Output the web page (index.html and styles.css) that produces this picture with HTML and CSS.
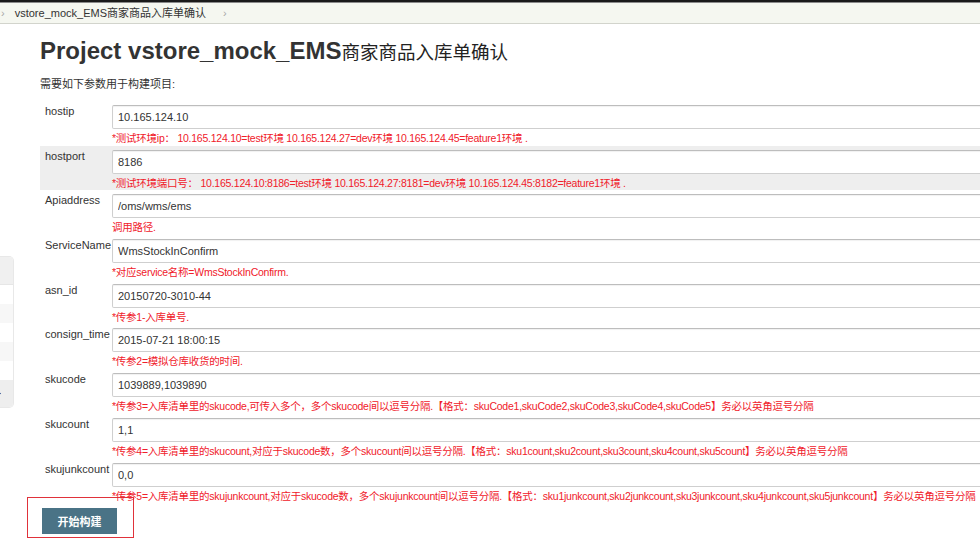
FILE: index.html
```html
<!DOCTYPE html>
<html lang="zh-CN">
<head>
<meta charset="utf-8">
<title>vstore_mock_EMS商家商品入库单确认</title>
<link rel="stylesheet" href="styles.css">
</head>
<body>
<div class="topbar"></div>
<nav class="crumbs">
  <span class="sep">›</span>
  <span class="crumb">vstore_mock_EMS商家商品入库单确认</span>
  <span class="sep">›</span>
</nav>
<div class="page">
  <aside class="side">
    <div class="widget">
      <div class="w-head"></div>
      <div class="w-row"></div>
      <div class="w-row alt"></div>
      <div class="w-row"></div>
      <div class="w-row alt"></div>
      <div class="w-row"></div>
      <div class="w-foot">
        <svg class="w-icon" width="14" height="12" viewBox="0 0 14 12" aria-hidden="true">
          <path d="M3 3 L7 5.5 L3 8 M3 10 L7 10" fill="none" stroke="#2a4d8f" stroke-width="1.3"/>
        </svg>
      </div>
    </div>
  </aside>
  <main class="main">
    <h1 class="title">Project vstore_mock_EMS<span class="cn">商家商品入库单确认</span></h1>
    <p class="intro">需要如下参数用于构建项目:</p>
    <div class="params">
      <div class="param">
        <div class="label">hostip</div>
        <div class="field">
          <input class="input" type="text" value="10.165.124.10">
          <div class="desc">*测试环境ip： 10.165.124.10=test环境 10.165.124.27=dev环境 10.165.124.45=feature1环境 .</div>
        </div>
      </div>
      <div class="param hover">
        <div class="label">hostport</div>
        <div class="field">
          <input class="input" type="text" value="8186">
          <div class="desc">*测试环境端口号： 10.165.124.10:8186=test环境 10.165.124.27:8181=dev环境 10.165.124.45:8182=feature1环境 .</div>
        </div>
      </div>
      <div class="param">
        <div class="label">Apiaddress</div>
        <div class="field">
          <input class="input" type="text" value="/oms/wms/ems">
          <div class="desc">调用路径.</div>
        </div>
      </div>
      <div class="param">
        <div class="label">ServiceName</div>
        <div class="field">
          <input class="input" type="text" value="WmsStockInConfirm">
          <div class="desc">*对应service名称=WmsStockInConfirm.</div>
        </div>
      </div>
      <div class="param">
        <div class="label">asn_id</div>
        <div class="field">
          <input class="input" type="text" value="20150720-3010-44">
          <div class="desc">*传参1-入库单号.</div>
        </div>
      </div>
      <div class="param">
        <div class="label">consign_time</div>
        <div class="field">
          <input class="input" type="text" value="2015-07-21 18:00:15">
          <div class="desc">*传参2=模拟仓库收货的时间.</div>
        </div>
      </div>
      <div class="param">
        <div class="label">skucode</div>
        <div class="field">
          <input class="input" type="text" value="1039889,1039890">
          <div class="desc">*传参3=入库清单里的skucode,可传入多个，多个skucode间以逗号分隔.【格式：skuCode1,skuCode2,skuCode3,skuCode4,skuCode5】务必以英角逗号分隔</div>
        </div>
      </div>
      <div class="param">
        <div class="label">skucount</div>
        <div class="field">
          <input class="input" type="text" value="1,1">
          <div class="desc">*传参4=入库清单里的skucount,对应于skucode数，多个skucount间以逗号分隔.【格式：sku1count,sku2count,sku3count,sku4count,sku5count】务必以英角逗号分隔</div>
        </div>
      </div>
      <div class="param">
        <div class="label">skujunkcount</div>
        <div class="field">
          <input class="input" type="text" value="0,0">
          <div class="desc">*传参5=入库清单里的skujunkcount,对应于skucode数，多个skujunkcount间以逗号分隔.【格式：sku1junkcount,sku2junkcount,sku3junkcount,sku4junkcount,sku5junkcount】务必以英角逗号分隔</div>
        </div>
      </div>
    </div>
    <div class="submit-box">
      <button class="build" type="button">开始构建</button>
    </div>
  </main>
</div>
</body>
</html>
```

FILE: styles.css
```css
html, body {
  margin: 0;
  padding: 0;
  overflow: hidden;
  background: #fff;
}
body {
  font-family: "Liberation Sans", Arial, "Noto Sans CJK SC", sans-serif;
  font-size: 11px;
  color: #333;
  width: 980px;
  height: 541px;
}
.topbar {
  height: 2px;
  background: #1a1a1a;
  border-bottom: 1px solid #8a8a8a;
}
.crumbs {
  height: 20px;
  background: #f5f7f0;
  border-bottom: 1px solid #d2d4cc;
  display: flex;
  align-items: center;
  font-size: 11px;
  line-height: 20px;
  color: #333;
}
.crumbs .sep {
  color: #a8a8a8;
  font-size: 11px;
}
.crumbs .sep:first-child {
  margin-left: 1px;
}
.crumbs .crumb {
  margin-left: 10px;
  margin-right: 17px;
}
.page {
  display: flex;
  align-items: flex-start;
}
.side {
  width: 14px;
  flex: none;
  overflow: hidden;
  padding-top: 232px;
}
.widget {
  width: 200px;
  margin-left: -186px;
  border: 1px solid #e8e8e8;
  border-left: none;
  border-radius: 0 5px 5px 0;
  overflow: hidden;
  box-sizing: border-box;
}
.w-head {
  height: 27px;
  background: #f0f0f0;
  border-bottom: 1px solid #e6e6e6;
}
.w-row {
  height: 19px;
  background: #fff;
}
.w-row.alt {
  background: #f7f7f7;
}
.w-foot {
  height: 27px;
  background: #eeeeee;
  display: flex;
  align-items: center;
  justify-content: flex-end;
}
.w-icon {
  display: block;
  margin-right: 6px;
}
.main {
  margin-left: 26px;
  flex: 1;
  min-width: 0;
}
.title {
  margin: 12px 0 0;
  height: 30px;
  font-size: 24px;
  line-height: 30px;
  font-weight: bold;
  color: #333;
  white-space: nowrap;
}
.title .cn {
  font-size: 18.5px;
  font-weight: normal;
  color: #222;
}
.intro {
  margin: 11px 0 10px;
  height: 14px;
  line-height: 14px;
  font-size: 11px;
  color: #333;
}
.params {
  display: flex;
  flex-direction: column;
}
.param {
  display: flex;
  height: 44.7px;
  box-sizing: border-box;
  padding-top: 3px;
}
.param.hover {
  background: #eeeeee;
}
.label {
  width: 67px;
  padding-left: 5px;
  flex: none;
  line-height: 14px;
  color: #333;
  white-space: nowrap;
}
.field {
  flex: 1;
  min-width: 0;
}
.input {
  display: block;
  box-sizing: border-box;
  width: 900px;
  height: 24px;
  margin: 1px 0 0;
  padding: 0 5px;
  border: 1px solid #cfcfcf;
  border-top-color: #bdbdbd;
  border-radius: 2px;
  background: #fff;
  box-shadow: inset 0 1px 1px rgba(0, 0, 0, 0.06);
  font-family: "Liberation Sans", Arial, "Noto Sans CJK SC", sans-serif;
  font-size: 11px;
  color: #333;
}
.desc {
  margin-top: 2px;
  height: 14px;
  line-height: 14px;
  font-size: 10.5px;
  letter-spacing: -0.25px;
  color: #f0202a;
  white-space: nowrap;
}
.submit-box {
  margin: -6px 0 0 -13px;
  width: 107px;
  height: 41px;
  box-sizing: border-box;
  border: 1px solid #e0323a;
  padding: 10px 0 0 14px;
}
.build {
  display: block;
  width: 75px;
  height: 26px;
  border: none;
  background: #4a7386;
  color: #fff;
  font-family: "Liberation Sans", Arial, "Noto Sans CJK SC", sans-serif;
  font-size: 11px;
  font-weight: bold;
  padding: 0;
  cursor: pointer;
}
```
